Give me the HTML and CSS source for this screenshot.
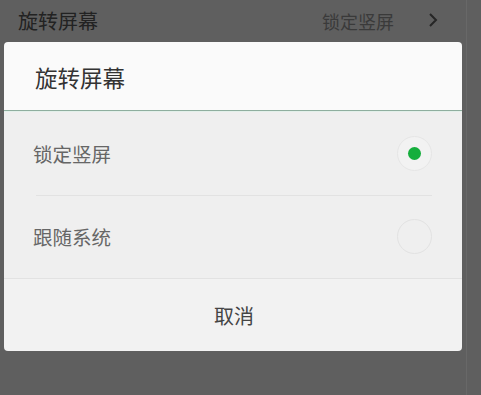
FILE: index.html
```html
<!DOCTYPE html>
<html lang="zh">
<head>
<meta charset="utf-8">
<link rel="stylesheet" href="styles.css">
</head>
<body>
<div class="page">
  <div class="setting-row">
    <span class="setting-name">旋转屏幕</span>
    <span class="setting-value">锁定竖屏</span>
    <svg class="chevron" width="10" height="16" viewBox="0 0 10 16"><path d="M2 2 L8 8 L2 14" fill="none" stroke="#262626" stroke-width="2"/></svg>
  </div>
  <div class="dialog">
    <div class="dialog-title">旋转屏幕</div>
    <div class="dialog-body">
      <div class="option">
        <span class="option-label">锁定竖屏</span>
        <span class="radio checked"><span class="dot"></span></span>
      </div>
      <div class="divider"></div>
      <div class="option">
        <span class="option-label">跟随系统</span>
        <span class="radio"></span>
      </div>
    </div>
    <div class="dialog-cancel">取消</div>
  </div>
</div>
</body>
</html>
```
FILE: styles.css
```css
html, body {
  margin: 0;
  padding: 0;
  background: #5f5f5f;
  width: 481px;
  height: 395px;
  overflow: hidden;
  font-family: "Noto Sans CJK SC", "Noto Sans", sans-serif;
}
.page {
  display: flex;
  flex-direction: column;
  height: 395px;
  border-right: 1px solid #686868;
  width: 466px;
}
.setting-row {
  height: 42px;
  display: flex;
  align-items: center;
  padding: 0 0 0 18px;
  box-sizing: border-box;
}
.setting-name {
  font-size: 20px;
  color: #222;
  flex: 1;
  margin-top: -2px;
}
.setting-value {
  font-size: 18px;
  color: #3a3a3a;
  margin-right: 34px;
}
.chevron {
  margin-right: 28px;
  margin-top: -2px;
}
.dialog {
  margin-left: 4px;
  width: 458px;
  height: 309px;
  border-radius: 4px;
  overflow: hidden;
  display: flex;
  flex-direction: column;
}
.dialog-title {
  height: 69px;
  background: #fafafa;
  display: flex;
  align-items: center;
  padding-left: 31px;
  font-size: 22.5px;
  color: #333;
  border-bottom: 1px solid #8fae9f;
  box-sizing: border-box;
  padding-top: 1px;
}
.dialog-body {
  background: #efefef;
  border-top: 1px solid #e3f0ea;
  border-bottom: 1px solid #e2e2e2;
  height: 168px;
  box-sizing: border-box;
  display: flex;
  flex-direction: column;
}
.option {
  flex: 1;
  display: flex;
  align-items: center;
  padding: 0 30px 0 29px;
}
.option-label {
  flex: 1;
  font-size: 19.5px;
  color: #666;
}
.radio {
  width: 35px;
  height: 35px;
  box-sizing: border-box;
  border: 1px solid #e2e2e2;
  border-radius: 50%;
  display: flex;
  align-items: center;
  justify-content: center;
}
.radio.checked {
  border-color: #e6e6e6;
  background: #f2f2f2;
}
.dot {
  width: 13px;
  height: 13px;
  border-radius: 50%;
  background: #15ae3c;
}
.divider {
  height: 1px;
  background: #e2e2e2;
  margin: 0 30px 0 32px;
}
.dialog-cancel {
  flex: 1;
  background: #f2f2f2;
  display: flex;
  align-items: center;
  justify-content: center;
  font-size: 20px;
  color: #444;
  padding-left: 2px;
}
```
